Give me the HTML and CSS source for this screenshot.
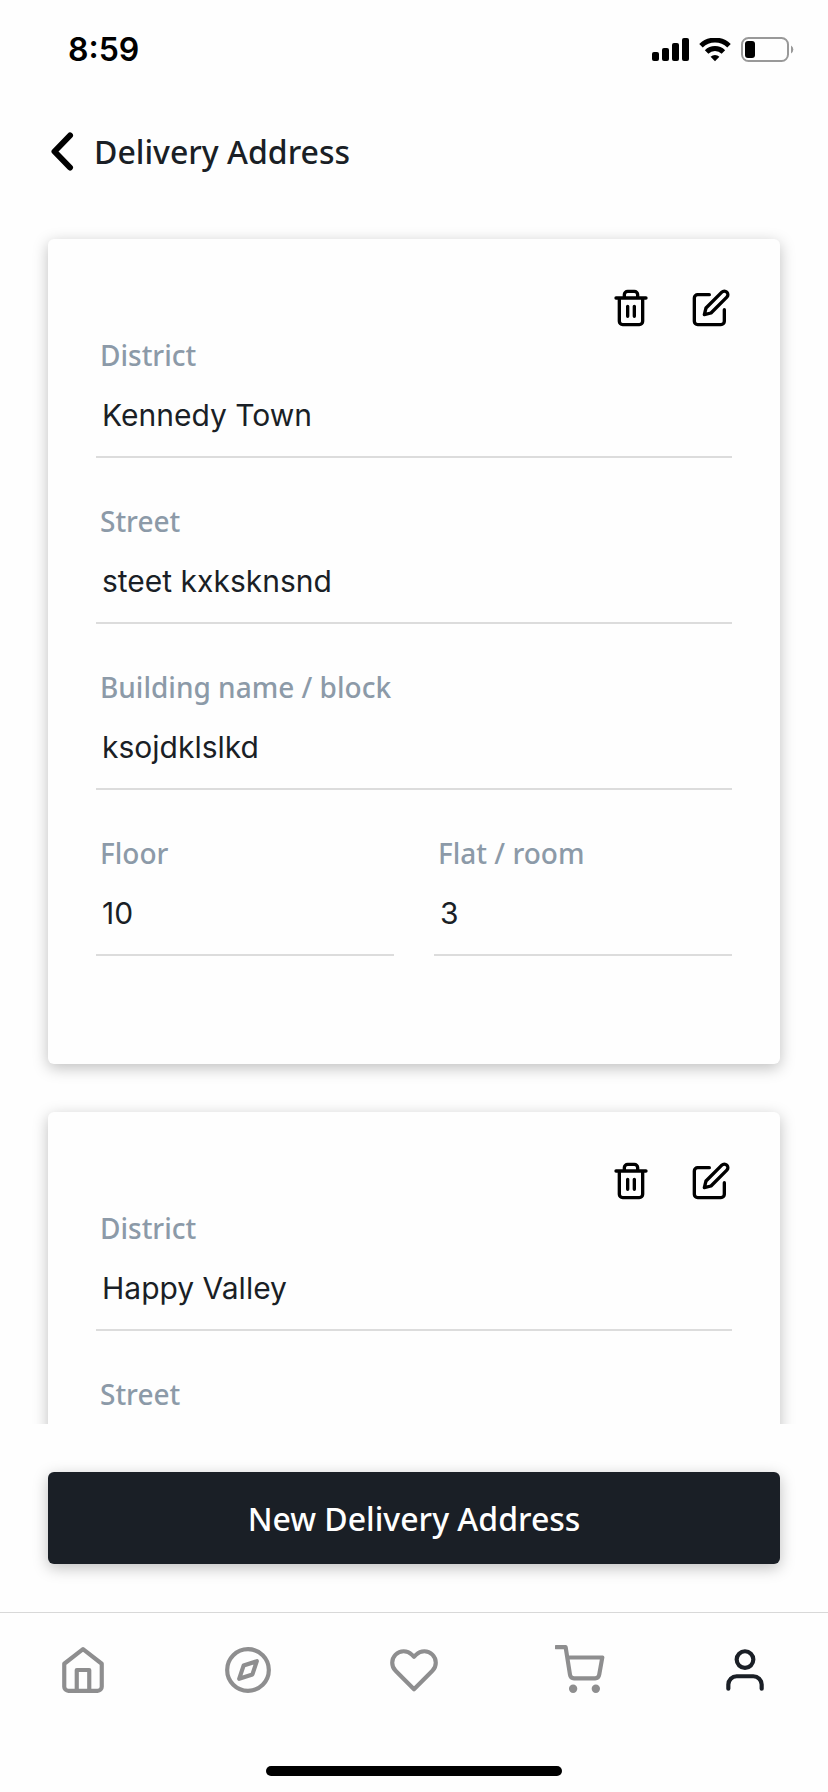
FILE: index.html
```html
<!DOCTYPE html>
<html lang="en">
<head>
<meta charset="utf-8">
<meta name="viewport" content="width=device-width, initial-scale=1">
<title>Delivery Address</title>
<link rel="stylesheet" href="styles.css">
</head>
<body>
<svg class="sprite" aria-hidden="true">
  <symbol id="trash" viewBox="0 0 24 24"><path d="M3 6h18M19 6v14a2 2 0 0 1-2 2H7a2 2 0 0 1-2-2V6m3 0V4a2 2 0 0 1 2-2h4a2 2 0 0 1 2 2v2M10 11v6M14 11v6"/></symbol>
  <symbol id="edit" viewBox="0 0 24 24"><path d="M11 4H4a2 2 0 0 0-2 2v14a2 2 0 0 0 2 2h14a2 2 0 0 0 2-2v-7"/><path d="M18.5 2.5a2.121 2.121 0 0 1 3 3L12 15l-4 1 1-4 9.5-9.5z"/></symbol>
</svg>

<div class="status">
  <span class="clock">8:59</span>
  <div class="indicators">
    <svg width="37" height="24" viewBox="0 0 37 24" role="img" aria-label="Signal">
      <rect x="0" y="14" width="7" height="9" rx="2"/><rect x="10" y="10" width="7" height="13" rx="2"/><rect x="20" y="5" width="7" height="18" rx="2"/><rect x="30" y="0" width="7" height="23" rx="2"/>
    </svg>
    <svg width="32" height="24" viewBox="0 0 32 24" role="img" aria-label="Wi-Fi">
      <path class="wave" d="M2 7.8a20 20 0 0 1 28 0M7.6 14a12 12 0 0 1 16.8 0"/>
      <path d="M16 23.2l-4.4-4.5a6.4 6.4 0 0 1 8.8 0z"/>
    </svg>
    <svg width="53" height="26" viewBox="0 0 53 26" role="img" aria-label="Battery">
      <rect class="shell" x="1" y="1" width="46" height="23" rx="6.5"/><rect x="4" y="4" width="10" height="17" rx="3"/><path class="cap" d="M50 8.5a4.6 4.6 0 0 1 0 8z"/>
    </svg>
  </div>
</div>

<header class="header">
  <button class="back" type="button" aria-label="Back"><svg width="24" height="40" viewBox="0 0 24 40"><path d="M20 3.5L4.5 19.500 20 35.5"/></svg></button>
  <h1 class="title">Delivery Address</h1>
</header>

<main class="list">
  <form class="card">
    <div class="actions">
      <button class="action" type="button" aria-label="Delete address"><svg class="icon"><use href="#trash"/></svg></button>
      <button class="action" type="button" aria-label="Edit address"><svg class="icon"><use href="#edit"/></svg></button>
    </div>
    <div class="fields">
      <div class="field wide"><label for="district-1">District</label><input id="district-1" type="text" value="Kennedy Town"></div>
      <div class="field wide"><label for="street-1">Street</label><input id="street-1" type="text" value="steet kxksknsnd"></div>
      <div class="field wide"><label for="building-1">Building name / block</label><input id="building-1" type="text" value="ksojdklslkd"></div>
      <div class="field"><label for="floor-1">Floor</label><input id="floor-1" type="text" value="10"></div>
      <div class="field"><label for="flat-1">Flat / room</label><input id="flat-1" type="text" value="3"></div>
    </div>
  </form>
  <form class="card">
    <div class="actions">
      <button class="action" type="button" aria-label="Delete address"><svg class="icon"><use href="#trash"/></svg></button>
      <button class="action" type="button" aria-label="Edit address"><svg class="icon"><use href="#edit"/></svg></button>
    </div>
    <div class="fields">
      <div class="field wide"><label for="district-2">District</label><input id="district-2" type="text" value="Happy Valley"></div>
      <div class="field wide"><label for="street-2">Street</label><input id="street-2" type="text"></div>
    </div>
  </form>
</main>

<div class="cta"><button class="primary" type="button">New Delivery Address</button></div>

<footer class="bottom">
  <nav class="tabs">
    <a class="tab" href="#home" aria-label="Home"><svg viewBox="0 0 24 24"><path d="M3 9l9-7 9 7v11a2 2 0 0 1-2 2H5a2 2 0 0 1-2-2z"/><path d="M9 22V12h6v10"/></svg></a>
    <a class="tab" href="#explore" aria-label="Explore"><svg viewBox="0 0 24 24"><circle cx="12" cy="12" r="10"/><path d="M16.24 7.76l-2.12 6.36-6.36 2.12 2.12-6.36z"/></svg></a>
    <a class="tab" href="#saved" aria-label="Saved"><svg viewBox="0 0 24 24"><path d="M20.84 4.61a5.5 5.5 0 0 0-7.78 0L12 5.67l-1.06-1.06a5.5 5.5 0 0 0-7.78 7.78l1.06 1.06L12 21.23l7.78-7.78 1.06-1.06a5.5 5.5 0 0 0 0-7.78z"/></svg></a>
    <a class="tab" href="#cart" aria-label="Cart"><svg viewBox="0 0 24 24"><circle cx="8.7" cy="21" r="1"/><circle cx="19.6" cy="21" r="1"/><path d="M.6 1h4.5l2.1 13.3a2 2 0 0 0 2 1.7h10a2 2 0 0 0 2-1.7L22.700 6H6"/></svg></a>
    <a class="tab active" href="#account" aria-label="Account" aria-current="page"><svg viewBox="0 0 24 24"><path d="M20 21v-2a4 4 0 0 0-4-4H8a4 4 0 0 0-4 4v2"/><circle cx="12" cy="7" r="4"/></svg></a>
  </nav>
  <div class="home-bar"></div>
</footer>
</body>
</html>
```

FILE: styles.css
```css
* { box-sizing: border-box; }

body {
  margin: 0;
  height: 100vh;
  display: flex;
  flex-direction: column;
  background: #fefefe;
  color: #1a1f26;
  font-family: "Noto Sans", "Open Sans", sans-serif;
}

button {
  border: 0;
  padding: 0;
  background: none;
  color: inherit;
  font: inherit;
}

svg { display: block; }
.sprite { position: absolute; width: 0; height: 0; }

.status {
  flex: none;
  display: flex;
  justify-content: space-between;
  align-items: center;
  height: 100px;
  padding: 0 34px 0 68px;
  color: #000;
}
.clock { font: 600 32px/40px Inter, sans-serif; }
.indicators { display: flex; align-items: center; gap: 10px; }
.wave { fill: none; stroke: #000; stroke-width: 5; }
.shell { fill: none; stroke: #999; stroke-width: 2; }
.cap { fill: #999; }

.header {
  flex: none;
  display: flex;
  align-items: center;
  gap: 20px;
  height: 103px;
  padding: 0 48px 0 50px;
}
.back path {
  fill: none;
  stroke: #000;
  stroke-width: 6;
  stroke-linecap: round;
  stroke-linejoin: round;
}
.title { margin: 0; font-size: 32px; line-height: 40px; font-weight: 500; }

.list {
  flex: 1;
  min-height: 0;
  overflow-y: auto;
  scrollbar-width: none;
  padding: 36px 48px;
  display: flex;
  flex-direction: column;
  gap: 48px;
}
.card {
  flex: none;
  padding: 48px 48px 108px;
  border-radius: 6px;
  background: #fefefe;
  box-shadow: 0 4px 15px rgba(0, 0, 0, .25);
}
.actions { display: flex; justify-content: flex-end; gap: 38px; }
.action {
  display: grid;
  place-items: center;
  width: 42px;
  height: 42px;
  color: #000;
}
.icon { width: 40px; height: 40px; }
.icon, .tab svg {
  fill: none;
  stroke: currentColor;
  stroke-width: 2;
  stroke-linecap: round;
  stroke-linejoin: round;
}

.fields {
  display: grid;
  grid-template-columns: 1fr 1fr;
  gap: 40px;
  margin-top: 3px;
}
.field { display: flex; flex-direction: column; min-width: 0; }
.wide { grid-column: 1 / -1; }
.field label {
  padding: 0 4px;
  color: #8c9aa8;
  font-size: 28px;
  line-height: 46px;
  font-weight: 500;
}
.field input {
  width: 100%;
  height: 80px;
  padding: 0 6px 4px;
  border: 0;
  border-bottom: 2px solid #dcdcdc;
  border-radius: 0;
  background: none;
  color: inherit;
  font: 400 30px/40px Inter, sans-serif;
}

.cta { flex: none; padding: 48px; }
.primary {
  display: block;
  width: 100%;
  height: 92px;
  padding-top: 2px;
  border-radius: 6px;
  background: #1a1f26;
  color: #fff;
  font-size: 32px;
  line-height: 40px;
  font-weight: 500;
  box-shadow: 0 4px 15px rgba(0, 0, 0, .25);
}

.bottom {
  flex: none;
  display: flex;
  flex-direction: column;
  justify-content: space-between;
  height: 180px;
  padding: 32px 0 16px;
  border-top: 1px solid #d8d8d8;
}
.tabs { display: grid; grid-template-columns: repeat(5, 1fr); }
.tab { display: grid; justify-items: center; color: #8e8e8f; }
.tab svg { width: 50px; height: 50px; }
.tab.active { color: #1a1f26; }
.home-bar {
  align-self: center;
  width: 296px;
  height: 10px;
  border-radius: 5px;
  background: #000;
}
```
